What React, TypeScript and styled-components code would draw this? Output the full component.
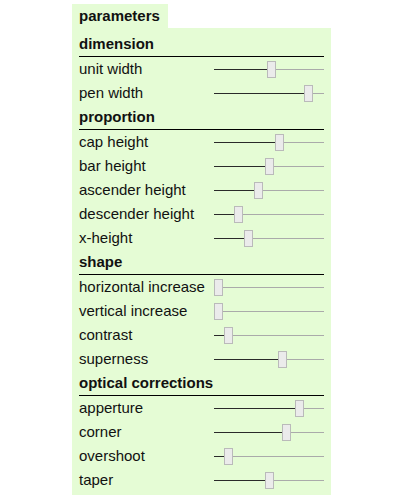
import React from 'react'
import styled, { createGlobalStyle } from 'styled-components'

const GlobalStyle = createGlobalStyle`
	body {
		margin: 0;
		background: #ffffff;
		font-family: "Liberation Sans", Arial, Helvetica, sans-serif;
		color: #111111;
	}
`

const Page = styled.div`
	padding: 4px 0 0 72px;
`

const Tab = styled.div`
	display: inline-block;
	height: 24px;
	line-height: 23px;
	padding: 0 8px 0 7px;
	background: #e5fcd5;
	font-weight: bold;
	font-size: 15px;
`

const Panel = styled.div`
	width: 245px;
	padding: 4px 7px 3px;
	background: #e5fcd5;
`

const Heading = styled.div`
	height: 24px;
	line-height: 24px;
	font-weight: bold;
	font-size: 15px;
	border-bottom: 1px solid #000000;
`

const Row = styled.div`
	display: grid;
	grid-template-columns: 135px 110px;
	align-items: center;
	height: 24px;
`

const Label = styled.div`
	font-size: 15px;
	line-height: 24px;
	white-space: nowrap;
`

const Track = styled.div`
	display: flex;
	align-items: center;
	height: 24px;
`

const Line = styled.div<{ $filled?: boolean }>`
	height: 1px;
	background: ${p => (p.$filled ? '#2a2a2a' : '#aaaaaa')};
	flex: ${p => (p.$filled ? '0 0 auto' : '1 1 auto')};
`

const Thumb = styled.div`
	flex: 0 0 auto;
	box-sizing: border-box;
	width: 9px;
	height: 17px;
	margin-top: 1px;
	background: #ebebeb;
	border: 1px solid #bababa;
`

const TRAVEL = 101

function Slider({ value }: { value: number }) {
	return (
		<Track>
			<Line $filled style={{ width: Math.round(value * TRAVEL) }} />
			<Thumb />
			<Line />
		</Track>
	)
}

const groups: { title: string; params: [string, number][] }[] = [
	{
		title: 'dimension',
		params: [
			['unit width', 0.525],
			['pen width', 0.89],
		],
	},
	{
		title: 'proportion',
		params: [
			['cap height', 0.6],
			['bar height', 0.505],
			['ascender height', 0.4],
			['descender height', 0.2],
			['x-height', 0.3],
		],
	},
	{
		title: 'shape',
		params: [
			['horizontal increase', 0],
			['vertical increase', 0],
			['contrast', 0.1],
			['superness', 0.63],
		],
	},
	{
		title: 'optical corrections',
		params: [
			['apperture', 0.8],
			['corner', 0.67],
			['overshoot', 0.1],
			['taper', 0.505],
		],
	},
]

export default function App() {
	return (
		<Page>
			<GlobalStyle />
			<Tab>parameters</Tab>
			<Panel>
				{groups.map(g => (
					<React.Fragment key={g.title}>
						<Heading>{g.title}</Heading>
						{g.params.map(([name, value]) => (
							<Row key={name}>
								<Label>{name}</Label>
								<Slider value={value} />
							</Row>
						))}
					</React.Fragment>
				))}
			</Panel>
		</Page>
	)
}
